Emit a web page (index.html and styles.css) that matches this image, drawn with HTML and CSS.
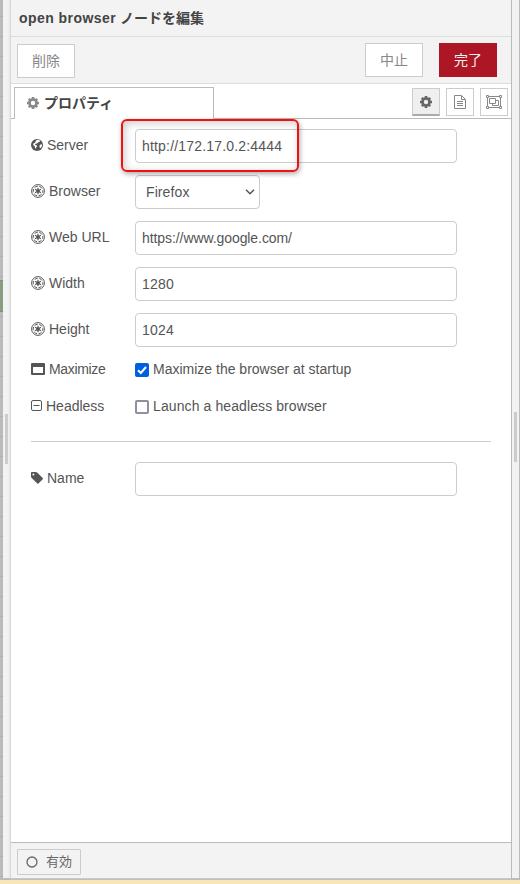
FILE: index.html
```html
<!DOCTYPE html>
<html lang="ja">
<head>
<meta charset="utf-8">
<title>open browser ノードを編集</title>
<link rel="stylesheet" href="styles.css">
</head>
<body>
<svg class="defs" width="0" height="0">
  <symbol id="gear" viewBox="0 0 14 14"><circle cx="7" cy="7" r="3.500" fill="none" stroke="currentColor" stroke-width="2.600"/><path stroke="currentColor" stroke-width="2.600" d="M7 1v2M7 11v2M1 7h2M11 7h2M2.800 2.800l1.300 1.300M9.900 9.900l1.300 1.300M2.800 11.200l1.300-1.300M9.900 4.100l1.300-1.300"/></symbol>
  <symbol id="empire" viewBox="0 0 14 14"><circle cx="7" cy="7" r="6.400" fill="none" stroke="currentColor" stroke-width="1"/><circle cx="7" cy="7" r="4.800" fill="none" stroke="currentColor" stroke-width="1" stroke-dasharray="3.400 1.626" stroke-dashoffset="1.700"/><circle cx="7" cy="7" r="1.700" fill="currentColor"/><path stroke="currentColor" stroke-width="1.200" d="M7 3.700v6.600M4.100 5.350l5.800 3.300M4.100 8.650l5.800-3.300"/></symbol>
</svg>
<div class="app">
  <div class="canvas"><i class="node"></i></div>
  <div class="separator left"><i></i></div>
  <main class="tray">
    <header><span class="type">open browser</span> ノードを編集</header>
    <div class="toolbar">
      <button class="delete">削除</button>
      <button class="cancel">中止</button>
      <button class="done">完了</button>
    </div>
    <div class="tabs">
      <div class="tab"><svg width="14" height="14"><use href="#gear"/></svg><span>プロパティ</span></div>
      <div class="views">
        <a class="selected"><svg width="14" height="14"><use href="#gear"/></svg></a>
        <a><svg width="14" height="16" viewBox="0 0 14 16"><path fill="none" stroke="currentColor" d="M1.500 1.500h7l4 4v9h-11zM8.500 1.500v4h4M4 7.500h6M4 9.500h6M4 11.500h6"/></svg></a>
        <a><svg width="16" height="14" viewBox="0 0 16 14"><path fill="none" stroke="currentColor" d="M1.500 2.500v9M14.500 2.500v9M2.500 1.500h11M2.500 12.500h11M3.500 3.500h6v5h-6zM9.500 5.500h3v5h-6v-2"/><path fill="#fff" stroke="currentColor" d="M.5.5h2v2h-2zM13.500.5h2v2h-2zM.5 11.500h2v2h-2zM13.500 11.500h2v2h-2z"/></svg></a>
      </div>
    </div>
    <form>
      <div class="row"><label for="server"><svg width="12" height="14" viewBox="0 0 12 14"><circle cx="6" cy="7" r="6" fill="currentColor"/><path fill="#fff" d="M5.500 2l1.500-.3 2.300 1-1 1.300-1.500.4-.8 1-1.500.3-.6 1 1.500.5.8 1-1 1-.3 1.500-.8-.8-.4-1.700-1.500-1.300.3-1.600 1.300-.4zM9 6.700l1.900-.4.1 1.500-.8 1.700L9 10.200 8.400 8.300z"/></svg>Server</label><div class="field"><input id="server" type="text" value="http://172.17.0.2:4444"><i class="callout"></i></div></div>
      <div class="row"><label><svg width="14" height="14"><use href="#empire"/></svg>Browser</label><div class="select">Firefox<svg width="10" height="6" viewBox="0 0 10 6"><path d="M1 .8l4 4 4-4" fill="none" stroke="currentColor" stroke-width="1.500"/></svg></div></div>
      <div class="row"><label for="url"><svg width="14" height="14"><use href="#empire"/></svg>Web URL</label><input id="url" class="tight" type="text" value="https://www.google.com/"></div>
      <div class="row"><label for="width"><svg width="14" height="14"><use href="#empire"/></svg>Width</label><input id="width" type="text" value="1280"></div>
      <div class="row"><label for="height"><svg width="14" height="14"><use href="#empire"/></svg>Height</label><input id="height" type="text" value="1024"></div>
      <div class="row check"><label class="narrow"><svg width="14" height="14" viewBox="0 0 14 14"><path fill="currentColor" fill-rule="evenodd" d="M1 1h12q1 0 1 1v10q0 1-1 1H1q-1 0-1-1V2q0-1 1-1zM2 5v6h10V5z"/></svg>Maximize</label><span class="box on"><svg width="14" height="14" viewBox="0 0 14 14"><path d="M3 7.200l2.800 2.800 5.200-6" fill="none" stroke="#fff" stroke-width="2"/></svg></span><span class="tight">Maximize the browser at startup</span></div>
      <div class="row check"><label><svg width="11" height="14" viewBox="0 0 11 14"><rect x=".5" y="1.500" width="10" height="10" rx="1.500" fill="none" stroke="currentColor"/><path stroke="currentColor" d="M2.500 6.500h6"/></svg>Headless</label><span class="box"></span><span>Launch a headless browser</span></div>
      <hr>
      <div class="row"><label for="name"><svg width="12" height="14" viewBox="0 0 12 14"><path fill="currentColor" fill-rule="evenodd" d="M0 1.800Q0 1 .8 1h4q.7 0 1.300.6L11.700 7q.6.600 0 1.200l-4.200 4.200q-.6.600-1.200 0L.7 6.900Q0 6.300 0 5.600zM2.400 2.400a1 1 0 1 0 0 2a1 1 0 1 0 0-2z"/></svg>Name</label><input id="name" type="text"></div>
    </form>
    <footer><button><svg width="12" height="12" viewBox="0 0 12 12"><circle cx="6" cy="6" r="5" fill="none" stroke="currentColor" stroke-width="1.300"/></svg>有効</button></footer>
  </main>
  <div class="separator right"><i></i></div>
</div>
</body>
</html>
```
FILE: styles.css
```css
* { box-sizing: border-box; }
body { margin: 0; height: 884px; overflow: hidden; background: #f8e6b8; color: #555; font: 14px/20px "Liberation Sans", "Noto Sans CJK JP", sans-serif; }
.defs { position: absolute; }
.app { display: flex; height: 880px; border-bottom: 2px solid #bbb; background: #f3f3f3; }
.canvas { width: 3px; padding-top: 280px; background: repeating-linear-gradient(#bbb 0 16px, #afafaf 16px 17px, #bbb 17px 20px); }
.node { display: block; height: 32px; background: #899d80; border: solid #888; border-width: 1px 0; }
.separator { width: 8px; display: flex; background: #f2f2f2; }
.separator i { width: 3px; height: 50px; background: #ccc; }
.left { border-right: 1px solid #ccc; padding: 414px 0 0 2px; }
.right { padding: 412px 0 0 2px; border-right: 1px solid #bbb; }
.tray { width: 501px; display: flex; flex-direction: column; border-right: 1px solid #bbb; background: #fff; box-shadow: -1px 0 3px #ddd; }
header { height: 37px; padding: 8px 8px; background: #f3f3f3; border-bottom: 1px solid #ddd; font-weight: bold; color: #444; white-space: nowrap; }
.type { letter-spacing: .45px; }
.toolbar { height: 47px; padding: 6px 14px 0 6px; display: flex; background: #f3f3f3; border-bottom: 1px solid #ddd; }
button { font: inherit; color: #888; background: #fff; border: 1px solid #ccc; padding: 0; }
.toolbar button { width: 58px; height: 34px; }
.toolbar .delete { margin-top: 1px; }
.toolbar .cancel { margin-left: auto; }
.toolbar .done { margin-left: 16px; color: #eee; background: #ad1625; border-color: #ad1625; }
.tabs { display: flex; height: 35px; padding: 3px 3px 0 3px; background: linear-gradient(#bbb, #bbb) bottom / 100% 1px no-repeat; }
.tab { width: 200px; height: 32px; padding: 0 0 2px 11px; display: flex; align-items: center; background: #fff; border: 1px solid #bbb; border-bottom: 0; font-weight: bold; color: #444; }
.tab svg { color: #888; margin-right: 4px; }
.views { margin-left: auto; display: flex; gap: 6px; padding-top: 1px; }
.views a { width: 28px; height: 28px; display: flex; align-items: center; justify-content: center; border: 1px solid #ccc; color: #888; }
.views .selected { background: #efefef; border-bottom: 2px solid #aaa; color: #666; }
form { flex: 1; padding: 10px 20px 0; letter-spacing: .1px; }
.row { display: flex; height: 34px; margin-bottom: 12px; }
label { width: 104px; display: flex; height: 32px; align-items: center; white-space: nowrap; letter-spacing: 0; }
label.narrow { letter-spacing: -.35px; }
label svg { margin-right: 4px; flex: none; }
input { width: 322px; height: 34px; padding: 0 6px; border: 1px solid #ccc; border-radius: 4px; background: #fff; color: #555; font: inherit; letter-spacing: .18px; }
input.tight { letter-spacing: -.08px; }
span.tight { letter-spacing: 0; }
.field { position: relative; height: 34px; }
.callout { position: absolute; left: -14px; top: -10px; width: 178px; height: 53px; border: 2px solid #f21010; border-radius: 6px; box-shadow: 1px 2px 5px #0005, inset 2px 2px 8px #0003; }
.select { width: 125px; height: 34px; padding: 0 4px 0 10px; display: flex; align-items: center; justify-content: space-between; border: 1px solid #ccc; border-radius: 4px; }
.check { height: 20px; margin-bottom: 17px; align-items: center; }
.check label { height: 20px; }
.box { width: 14px; height: 14px; margin: 1px 4px 0 0; border: 2px solid #8f8f9d; border-radius: 2px; }
.box.on { border: 0; background: #0060df; }
.box svg { display: block; }
hr { margin: 25px 0 20px; border: 0; height: 1px; background: #ccc; }
footer { height: 36px; padding: 6px; background: #f3f3f3; border-top: 1px solid #bbb; }
footer button { width: 64px; height: 26px; display: flex; align-items: center; padding-left: 8px; background: #f3f3f3; color: #666; border-radius: 1px; font-size: 13px; }
footer svg { margin-right: 8px; }
```
